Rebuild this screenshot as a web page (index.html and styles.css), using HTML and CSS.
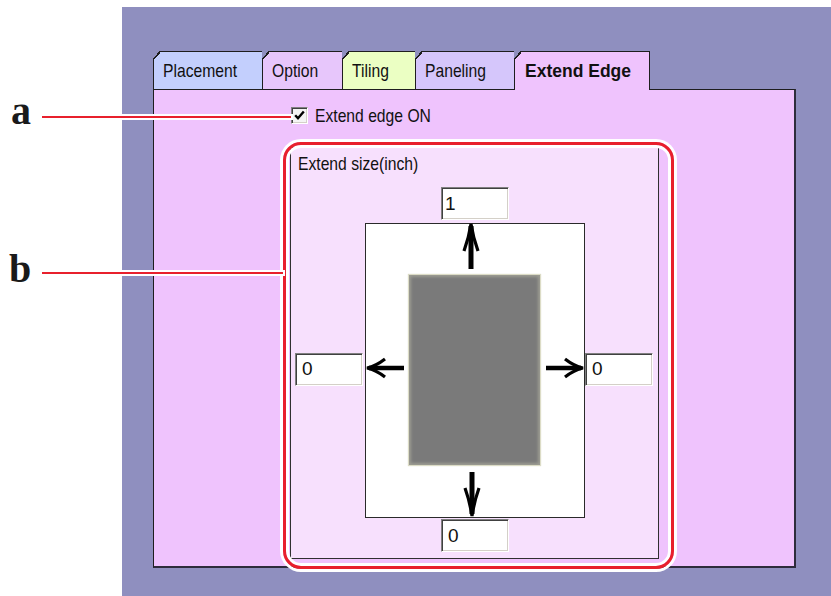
FILE: index.html
```html
<!DOCTYPE html>
<html lang="en">
<head>
<meta charset="UTF-8">
<title>Extend Edge</title>
<link rel="stylesheet" href="styles.css">
</head>
<body>

<div class="page">
    <div class="desk">
        <div class="tabs">
            <div class="tab tab-placement"><span class="narrow">Placement</span></div>
            <div class="tab tab-option"><span class="narrow">Option</span></div>
            <div class="tab tab-tiling"><span class="narrow">Tiling</span></div>
            <div class="tab tab-paneling"><span class="narrow">Paneling</span></div>
            <div class="tab tab-active">Extend Edge</div>
        </div>

        <div class="panel">
            <div class="check-row">
                <span class="checkbox">
                    <svg width="11" height="11" viewBox="0 0 11 11"><path d="M1.2 5.2 L4 8.2 L9.8 1.5" fill="none" stroke="#000" stroke-width="2.4"/></svg>
                </span>
                <span class="narrow">Extend edge ON</span>
            </div>

            <div class="group">
                <div class="group-title"><span class="narrow">Extend size(inch)</span></div>
                <div class="edges">
                    <input class="edge-input edge-top" type="text" value="1">
                    <input class="edge-input edge-left" type="text" value="0">
                    <div class="paper">
                        <svg class="arrow arrow-up" width="18" height="46" viewBox="0 0 18 46">
                            <path d="M9 3 L9 46" stroke="#000" stroke-width="5"/>
                            <path d="M2 28 Q7 14 9 1 Q11 14 16 28" fill="none" stroke="#000" stroke-width="3.2"/>
                        </svg>
                        <svg class="arrow arrow-left" width="38" height="22" viewBox="0 0 38 22">
                            <path d="M3 11 L38 11" stroke="#000" stroke-width="4.5"/>
                            <path d="M19 2 Q10 9 1 11 Q10 13 19 20" fill="none" stroke="#000" stroke-width="3.2"/>
                        </svg>
                        <div class="sheet"></div>
                        <svg class="arrow arrow-right" width="38" height="22" viewBox="0 0 38 22">
                            <path d="M0 11 L35 11" stroke="#000" stroke-width="4.5"/>
                            <path d="M19 2 Q28 9 37 11 Q28 13 19 20" fill="none" stroke="#000" stroke-width="3.2"/>
                        </svg>
                        <svg class="arrow arrow-down" width="18" height="45" viewBox="0 0 18 45">
                            <path d="M9 0 L9 42" stroke="#000" stroke-width="5"/>
                            <path d="M2 16 Q7 30 9 44 Q11 30 16 16" fill="none" stroke="#000" stroke-width="3.2"/>
                        </svg>
                    </div>
                    <input class="edge-input edge-right" type="text" value="0">
                    <input class="edge-input edge-bottom" type="text" value="0">
                </div>
            </div>
        </div>
    </div>

    <div class="highlight"></div>
    <div class="callout callout-a"></div>
    <div class="callout callout-b"></div>
    <span class="letter letter-a">a</span>
    <span class="letter letter-b">b</span>
</div>

</body>
</html>
```

FILE: styles.css
```css
body {
    margin: 0;
    background-color: #ffffff;
}

.page {
    position: relative;
    width: 831px;
    height: 596px;
    padding-top: 7px;
    box-sizing: border-box;
    overflow: hidden;
    font-family: "Liberation Sans", Arial, sans-serif;
    font-size: 19px;
    color: #111111;
}

/* the old dialog font is tall and narrow */
.narrow {
    display: inline-block;
    transform: scaleX(0.825);
    transform-origin: left center;
    white-space: nowrap;
}

.desk {
    margin-left: 122px;
    height: 589px;
    background-color: #8f8fbf;
    padding: 44px 0 0 31px;
    box-sizing: border-box;
}

/* tab strip */
.tabs {
    display: flex;
    height: 38px;
    position: relative;
    z-index: 1;
}

.tab {
    position: relative;
    box-sizing: border-box;
    height: 38px;
    border: 1px solid #1e1e1e;
    border-bottom: none;
    padding: 1px 0 0 9px;
    line-height: 36px;
    margin-left: -1px;
}

.tab::before {
    content: "";
    position: absolute;
    left: -1px;
    top: -1px;
    width: 8px;
    height: 9px;
    background: linear-gradient(to bottom right, #8f8fbf calc(50% - 1px), #1e1e1e calc(50% - 1px), #1e1e1e calc(50% + 0.6px), transparent calc(50% + 0.6px));
}

.tab-placement {
    width: 110px;
    margin-left: 0;
    background-color: #c3cffd;
}

.tab-option {
    width: 81px;
    background-color: #e7c6fb;
}

.tab-tiling {
    width: 74px;
    background-color: #ebffc3;
}

.tab-paneling {
    width: 100px;
    background-color: #d5c6fb;
}

.tab-active {
    width: 136px;
    height: 39px;
    background-color: #efc3fd;
    font-weight: bold;
    font-size: 17.5px;
    padding-left: 10px;
}

/* page body */
.panel {
    box-sizing: border-box;
    width: 643px;
    height: 479px;
    background-color: #efc3fd;
    border: 1px solid #1e1e1e;
    border-right: 2px solid #2e2c3c;
    border-bottom: 2px solid #2e2c3c;
    padding: 17px 0 0 136px;
}

.check-row {
    display: flex;
    align-items: center;
    height: 17px;
    margin-left: 1px;
}

.checkbox {
    box-sizing: border-box;
    width: 17px;
    height: 17px;
    border: 1px solid;
    border-color: #808080 #ffffff #ffffff #808080;
    box-shadow: inset 1px 1px #404040, inset -1px -1px #d4d0c8;
    background-color: #f4f4f4;
    display: flex;
    align-items: center;
    justify-content: center;
    margin-right: 7px;
}

.group {
    box-sizing: border-box;
    width: 369px;
    height: 412px;
    margin-top: 23px;
    background-color: #f7e0fd;
    border: 1px solid #303030;
    padding: 5px 0 0 4px;
}

.group-title {
    line-height: 22px;
    padding-left: 3px;
}

.edges {
    display: grid;
    grid-template-columns: 70px 220px 68px;
    grid-template-rows: 36px 295px 34px;
    grid-template-areas:
        ". top ."
        "left paper right"
        ". bottom .";
    margin-top: 12px;
}

.edge-input {
    box-sizing: border-box;
    width: 68px;
    height: 33px;
    margin: 0;
    border: 1px solid;
    border-color: #808080 #ffffff #ffffff #808080;
    box-shadow: inset 1px 1px #404040, inset -1px -1px #d4d0c8;
    background-color: #ffffff;
    font-family: inherit;
    font-size: 19px;
    color: #111111;
    padding: 0 0 0 6px;
    outline: none;
}

.edge-top {
    grid-area: top;
    justify-self: center;
    align-self: start;
    padding-left: 3px;
}

.edge-left {
    grid-area: left;
    align-self: center;
    margin-bottom: 3px;
}

.edge-right {
    grid-area: right;
    align-self: center;
    margin-bottom: 3px;
}

.edge-bottom {
    grid-area: bottom;
    justify-self: center;
    align-self: start;
    margin-top: 1px;
}

.paper {
    grid-area: paper;
    box-sizing: border-box;
    background-color: #ffffff;
    border: 1px solid #2a2a2a;
    display: grid;
    grid-template-columns: 43px 131px 1fr;
    grid-template-rows: 51px 190px 1fr;
}

.sheet {
    grid-column: 2;
    grid-row: 2;
    background-color: #7a7a7a;
    box-shadow: 0 0 1px 1px #dcdcc6, inset 0 0 3px 2px #9c9c92;
}

.arrow {
    display: block;
}

.arrow-up {
    grid-column: 2;
    grid-row: 1;
    justify-self: center;
    align-self: start;
    margin: -1px 7px 0 0;
}

.arrow-down {
    grid-column: 2;
    grid-row: 3;
    justify-self: center;
    align-self: end;
    margin-right: 5px;
}

.arrow-left {
    grid-column: 1;
    grid-row: 2;
    justify-self: start;
    align-self: center;
    margin-bottom: 4px;
}

.arrow-right {
    grid-column: 3;
    grid-row: 2;
    justify-self: end;
    align-self: center;
    margin-bottom: 4px;
}

/* annotation overlay */
.highlight {
    position: absolute;
    left: 283px;
    top: 142px;
    width: 391px;
    height: 427px;
    box-sizing: border-box;
    border: 3px solid #e8202c;
    border-radius: 18px;
    box-shadow: 0 0 0 3px #ffffff, inset 0 0 0 3px #ffffff;
}

.callout {
    position: absolute;
    left: 42px;
    height: 2px;
    background-color: #e8202c;
    box-shadow: 0 0 0 2px #ffffff;
}

.callout-a {
    top: 116px;
    width: 249px;
}

.callout-b {
    top: 272px;
    width: 241px;
}

.letter {
    position: absolute;
    font-family: "Liberation Serif", "Times New Roman", serif;
    font-weight: bold;
    font-size: 40px;
    line-height: 40px;
    color: #1a1a1a;
}

.letter-a {
    left: 11px;
    top: 91px;
}

.letter-b {
    left: 9px;
    top: 249px;
}
```
